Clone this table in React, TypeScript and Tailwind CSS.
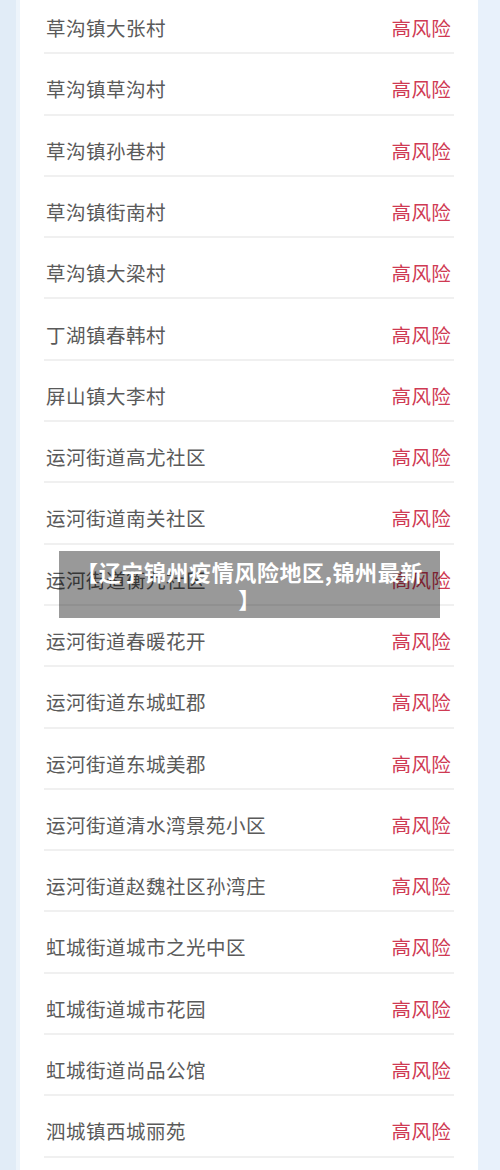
const places = [
  "草沟镇大张村",
  "草沟镇草沟村",
  "草沟镇孙巷村",
  "草沟镇街南村",
  "草沟镇大梁村",
  "丁湖镇春韩村",
  "屏山镇大李村",
  "运河街道高尤社区",
  "运河街道南关社区",
  "运河街道衡九社区",
  "运河街道春暖花开",
  "运河街道东城虹郡",
  "运河街道东城美郡",
  "运河街道清水湾景苑小区",
  "运河街道赵魏社区孙湾庄",
  "虹城街道城市之光中区",
  "虹城街道城市花园",
  "虹城街道尚品公馆",
  "泗城镇西城丽苑",
];

export default function App() {
  return (
    <div
      className="relative h-[1170px] w-[500px] overflow-hidden bg-[#e6eff9] flex"
      style={{ fontFamily: '"Noto Sans CJK SC", "Noto Sans", sans-serif' }}
    >
      <div className="w-[16px] bg-[#e1ecf7]" />
      <div className="w-[4px] bg-[#edf4fb]" />
      <div className="w-[458px] bg-white">
        <div className="-mt-[7px] px-[24px]">
          {places.map((name) => (
            <div
              key={name}
              className="h-[61.3px] flex items-center justify-between pt-[10px] border-b-2 border-[#f0f0f0]"
            >
              <span className="pl-[2px] text-[19.5px] text-[#5a5a5a] tracking-[0.5px]">{name}</span>
              <span className="pr-[3px] text-[19.5px] text-[#cf3a53] tracking-[0.3px]">高风险</span>
            </div>
          ))}
        </div>
      </div>
      <div className="flex-1 bg-[#e8f1fb]" />

      {/* title overlay */}
      <div className="absolute left-[59px] top-[551px] w-[381px] h-[67px] bg-black/40 flex items-center justify-center px-[8px]">
        <p className="text-center text-white font-bold text-[22px] leading-[27px] tracking-[0.6px]">
          【辽宁锦州疫情风险地区,锦州最新
          <br />】
        </p>
      </div>
    </div>
  );
}
